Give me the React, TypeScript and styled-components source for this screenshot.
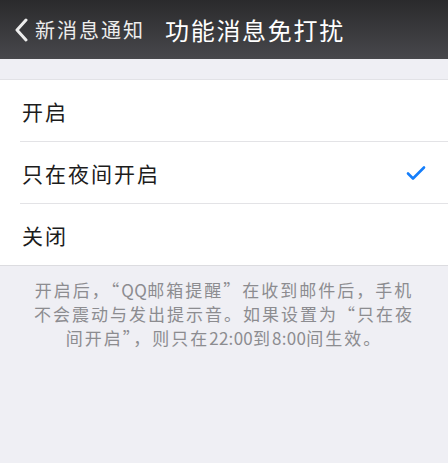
import React from "react";
import styled, { createGlobalStyle } from "styled-components";

const GlobalStyle = createGlobalStyle`
  html, body {
    margin: 0;
    padding: 0;
    background: #efeff4;
    font-family: "Noto Sans CJK SC", "Liberation Sans", sans-serif;
  }
`;

const Page = styled.div`
  width: 448px;
  min-height: 463px;
  background: #efeff4;
`;

const NavBar = styled.header`
  height: 59px;
  display: flex;
  align-items: center;
  padding: 0 0 0 14px;
  box-sizing: border-box;
  background: linear-gradient(#2a2a2c, #48484c);
  color: #fff;
`;

const BackButton = styled.div`
  display: flex;
  align-items: center;
  gap: 7px;
  font-size: 20px;
  letter-spacing: 2px;
  color: #ededed;
`;

const Title = styled.h1`
  margin: 0 0 0 20px;
  font-size: 24px;
  font-weight: 400;
  letter-spacing: 1.7px;
`;

const OptionList = styled.ul`
  list-style: none;
  margin: 20px 0 0;
  padding: 0;
  background: #fff;
  border-top: 1px solid #e2e2e6;
  border-bottom: 1px solid #dcdce0;
`;

const OptionRow = styled.li<{ $last?: boolean }>`
  height: 61px;
  display: flex;
  align-items: center;
  justify-content: space-between;
  margin-left: 20px;
  padding: 0 22px 0 2px;
  font-size: 21px;
  letter-spacing: 2px;
  color: #1c1c1c;
  border-bottom: ${(p) => (p.$last ? "none" : "1px solid #e3e3e6")};
`;

const Note = styled.p`
  margin: 0;
  padding: 12px 28px 0;
  text-align: center;
  font-size: 17px;
  letter-spacing: 2px;
  line-height: 24px;
  color: #8c8c90;
`;

const Latin = styled.span`
  letter-spacing: 0.3px;
`;

const options = [
  { label: "开启", checked: false },
  { label: "只在夜间开启", checked: true },
  { label: "关闭", checked: false },
];

export default function App() {
  return (
    <Page>
      <GlobalStyle />
      <NavBar>
        <BackButton>
          <svg width="14" height="24" viewBox="0 0 14 24">
            <path d="M12 2 L3 12 L12 22" fill="none" stroke="#ededed" strokeWidth="3" strokeLinecap="round" strokeLinejoin="round" />
          </svg>
          新消息通知
        </BackButton>
        <Title>功能消息免打扰</Title>
      </NavBar>

      <OptionList>
        {options.map((o, i) => (
          <OptionRow key={o.label} $last={i === options.length - 1}>
            {o.label}
            {o.checked && (
              <svg width="20" height="16" viewBox="0 0 20 16">
                <path d="M2 8.5 L7 13.5 L18 2.5" fill="none" stroke="#157efb" strokeWidth="2.6" strokeLinecap="round" strokeLinejoin="round" />
              </svg>
            )}
          </OptionRow>
        ))}
      </OptionList>

      <Note>
        开启后，“<Latin>QQ</Latin>邮箱提醒”在收到邮件后，手机不会震动与发出提示音。如果设置为“只在夜间开启”，则只在<Latin>22:00</Latin>到<Latin>8:00</Latin>间生效。
      </Note>
    </Page>
  );
}
